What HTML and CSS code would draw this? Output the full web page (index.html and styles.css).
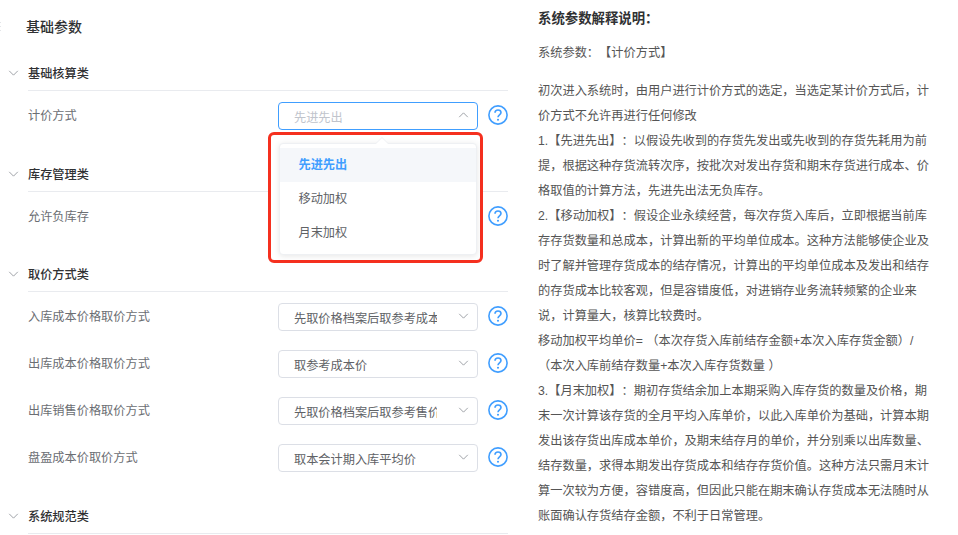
FILE: index.html
```html
<!DOCTYPE html>
<html lang="zh-CN">
<head>
<meta charset="utf-8">
<title>基础参数</title>
<link rel="stylesheet" href="styles.css">
</head>
<body>
<svg width="0" height="0" class="defs">
  <symbol id="chev" viewBox="0 0 12 7"><path d="M1 1l5 5 5-5" fill="none" stroke="currentColor" stroke-width="1"/></symbol>
  <symbol id="help" viewBox="0 0 20 20"><circle cx="10" cy="10" r="9.1" fill="none" stroke="currentColor" stroke-width="1.6"/><path d="M7 7.8C7 6 8.3 5 10 5s3 1.1 3 2.6c0 2.2-3 2.4-3 4.6" fill="none" stroke="currentColor" stroke-width="1.6"/><circle cx="10" cy="14.8" r="1.05" fill="currentColor"/></symbol>
</svg>
<main class="page">
  <section class="params">
    <span class="edge-mark"></span>
    <h1 class="title">基础参数</h1>

    <div class="group">
      <div class="group-head"><svg class="chev"><use href="#chev"/></svg><h2>基础核算类</h2></div>
      <div class="row">
        <span class="label">计价方式</span>
        <div class="select open"><span class="value placeholder">先进先出</span><svg class="arrow up"><use href="#chev"/></svg></div>
        <svg class="help"><use href="#help"/></svg>
      </div>
    </div>

    <div class="group">
      <div class="group-head"><svg class="chev"><use href="#chev"/></svg><h2>库存管理类</h2></div>
      <div class="row">
        <span class="label">允许负库存</span>
        <div class="select-slot"></div>
        <svg class="help"><use href="#help"/></svg>
      </div>
    </div>

    <div class="group">
      <div class="group-head"><svg class="chev"><use href="#chev"/></svg><h2>取价方式类</h2></div>
      <div class="row">
        <span class="label">入库成本价格取价方式</span>
        <div class="select"><span class="value">先取价格档案后取参考成本价</span><svg class="arrow"><use href="#chev"/></svg></div>
        <svg class="help"><use href="#help"/></svg>
      </div>
      <div class="row">
        <span class="label">出库成本价格取价方式</span>
        <div class="select"><span class="value">取参考成本价</span><svg class="arrow"><use href="#chev"/></svg></div>
        <svg class="help"><use href="#help"/></svg>
      </div>
      <div class="row">
        <span class="label">出库销售价格取价方式</span>
        <div class="select"><span class="value">先取价格档案后取参考售价</span><svg class="arrow"><use href="#chev"/></svg></div>
        <svg class="help"><use href="#help"/></svg>
      </div>
      <div class="row">
        <span class="label">盘盈成本价取价方式</span>
        <div class="select"><span class="value">取本会计期入库平均价</span><svg class="arrow"><use href="#chev"/></svg></div>
        <svg class="help"><use href="#help"/></svg>
      </div>
    </div>

    <div class="group">
      <div class="group-head"><svg class="chev"><use href="#chev"/></svg><h2>系统规范类</h2></div>
    </div>

    <div class="highlight">
      <div class="dropdown">
        <span class="caret"></span>
        <ul class="options">
          <li class="active">先进先出</li>
          <li>移动加权</li>
          <li>月末加权</li>
        </ul>
      </div>
    </div>
  </section>

  <aside class="notes">
    <h2 class="notes-title">系统参数解释说明：</h2>
    <p class="notes-sub">系统参数：【计价方式】</p>
    <p class="notes-body">初次进入系统时，由用户进行计价方式的选定，当选定某计价方式后，计<br>价方式不允许再进行任何修改<br>1.【先进先出】：以假设先收到的存货先发出或先收到的存货先耗用为前<br>提，根据这种存货流转次序，按批次对发出存货和期末存货进行成本、价<br>格取值的计算方法，先进先出法无负库存。<br>2.【移动加权】：假设企业永续经营，每次存货入库后，立即根据当前库<br>存存货数量和总成本，计算出新的平均单位成本。这种方法能够使企业及<br>时了解并管理存货成本的结存情况，计算出的平均单位成本及发出和结存<br>的存货成本比较客观，但是容错度低，对进销存业务流转频繁的企业来<br>说，计算量大，核算比较费时。<br>移动加权平均单价= （本次存货入库前结存金额+本次入库存货金额）/<br>（本次入库前结存数量+本次入库存货数量 ）<br>3.【月末加权】：期初存货结余加上本期采购入库存货的数量及价格，期<br>末一次计算该存货的全月平均入库单价，以此入库单价为基础，计算本期<br>发出该存货出库成本单价，及期末结存月的单价，并分别乘以出库数量、<br>结存数量，求得本期发出存货成本和结存存货价值。这种方法只需月末计<br>算一次较为方便，容错度高，但因此只能在期末确认存货成本无法随时从<br>账面确认存货结存金额，不利于日常管理。</p>
  </aside>
</main>
</body>
</html>
```
FILE: styles.css
```css
* { box-sizing: border-box; }
html, body { margin: 0; height: 535px; overflow: hidden; background: #fff; }
body { font-family: "Liberation Sans", "Noto Sans CJK SC", sans-serif; font-size: 12.2px; color: #606266; text-spacing-trim: space-all; }
.defs { position: absolute; }
.page { display: flex; width: 958px; height: 535px; overflow: hidden; }

.params { position: relative; width: 508px; flex: none; }
.edge-mark { position: absolute; left: 0; top: 22px; width: 1px; height: 10px; background: repeating-linear-gradient(#e3e5e8 0 1px, #fff 1px 4px); }
.title { margin: 0; padding: 18px 0 0 26px; height: 60px; font-size: 14px; line-height: 19px; font-weight: 500; color: #303133; }
.group-head { position: relative; display: flex; align-items: center; height: 31px; margin-left: 28px; border-bottom: 1px solid #e9ebef; padding-bottom: 1px; }
.group-head h2 { margin: 0; font-size: 12.2px; line-height: 17px; font-weight: 500; color: #303133; }
.chev { position: absolute; left: -20.5px; top: 10px; width: 11px; height: 6px; color: #8f9399; }

.row { display: flex; align-items: center; height: 47px; margin-left: 28px; padding-top: 3px; }
.label { flex: 1; margin-top: -2px; color: #6b6e73; }
.select, .select-slot { position: relative; width: 200px; height: 28px; display: flex; align-items: center; padding: 0 40px 0 15px; }
.select { border: 1px solid #dcdfe6; border-radius: 4px; }
.select.open { border-color: #409eff; }
.value { display: block; overflow: hidden; white-space: nowrap; color: #606266; padding-top: 1px; }
.placeholder { color: #c0c4cc; }
.arrow { position: absolute; right: 8px; top: 9px; width: 11px; height: 6px; color: #8f9399; }
.arrow.up { transform: rotate(180deg); }
.help { width: 20px; height: 20px; margin-left: 10px; margin-top: -2px; color: #409eff; flex: none; }

.group:nth-of-type(1) { padding-bottom: 23px; }
.group:nth-of-type(2) { padding-bottom: 22px; }
.group:nth-of-type(3) { padding-bottom: 23px; }

.highlight { position: absolute; left: 267.5px; top: 132px; width: 215px; height: 131px; border: 3px solid #f5301f; border-radius: 6px; background: #fff; }
.dropdown { position: absolute; left: 8px; top: 8px; width: 198px; height: 112px; background: #fff; border: 1px solid #eef0f3; border-radius: 4px; box-shadow: 0 1px 6px rgba(0,0,0,.1); }
.caret { position: absolute; left: 96px; top: -6px; width: 0; height: 0; border: 6px solid transparent; border-top: 0; border-bottom-color: #fff; filter: drop-shadow(0 -1px 0 #eef0f3); }
.options { list-style: none; margin: 0; padding: 4px 0 0; }
.options li { height: 34px; line-height: 34px; padding-left: 19px; color: #606266; }
.options li.active { background: #f5f7fa; color: #409eff; font-weight: 600; }

.notes { flex: 1; padding: 9px 0 0 30px; color: #555; font-size: 12.23px; }
.notes-title { margin: 0; font-size: 13.4px; line-height: 19px; font-weight: 700; color: #303133; }
.notes-sub { margin: 16px 0 0; line-height: 19px; }
.notes-body { margin: 16px 0 0; line-height: 25px; white-space: nowrap; }
```
